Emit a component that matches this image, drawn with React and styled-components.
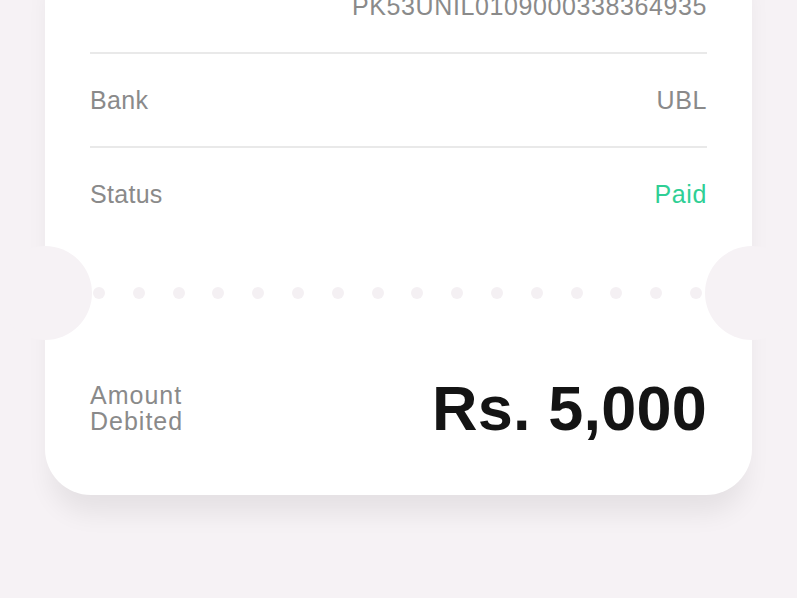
import React from 'react';
import styled, { createGlobalStyle } from 'styled-components';

const GlobalStyle = createGlobalStyle`
  html, body {
    margin: 0;
    padding: 0;
    background-color: #f6f2f5;
    font-family: "Liberation Sans", Arial, sans-serif;
  }
`;

const Page = styled.div`
  width: 797px;
  height: 598px;
  overflow: hidden;
  background-color: #f6f2f5;
`;

const Card = styled.div`
  position: relative;
  margin: -40px 45px 0;
  background-color: #fff;
  border-radius: 0 0 46px 46px;
  box-shadow: 0 24px 26px -6px rgba(0, 0, 0, 0.07);
`;

const Details = styled.div`
  padding: 0 45px;
`;

const Row = styled.div`
  display: flex;
  justify-content: space-between;
  align-items: center;
  height: 92px;
  border-bottom: ${(p) => (p.last ? 'none' : '2px solid #e9e9e9')};
`;

const Label = styled.span`
  font-size: 25px;
  color: #8a8a8a;
  letter-spacing: 0.3px;
`;

const Value = styled.span`
  font-size: 25px;
  color: ${(p) => p.color || '#8a8a8a'};
  letter-spacing: 0.6px;
`;

const Perforation = styled.div`
  position: relative;
  height: 106px;
  display: flex;
  align-items: center;
  justify-content: space-between;
  padding: 0 50px 0 48px;
`;

const Notch = styled.div`
  position: absolute;
  top: 6px;
  ${(p) => (p.side === 'left' ? 'left: -47px;' : 'right: -47px;')}
  width: 94px;
  height: 94px;
  border-radius: 50%;
  background-color: #f6f2f5;
`;

const Dot = styled.div`
  width: 12px;
  height: 12px;
  border-radius: 50%;
  background-color: #f4f0f3;
`;

const Total = styled.div`
  display: flex;
  justify-content: space-between;
  align-items: center;
  height: 56px;
  padding: 34px 45px 59px;
`;

const TotalLabel = styled.div`
  font-size: 25px;
  line-height: 26px;
  color: #8a8a8a;
  letter-spacing: 1px;
`;

const Amount = styled.div`
  font-size: 63px;
  font-weight: bold;
  color: #141414;
  letter-spacing: 0.2px;
`;

const rows = [
  { label: '', value: 'PK53UNIL0109000338364935' },
  { label: 'Bank', value: 'UBL' },
  { label: 'Status', value: 'Paid', color: '#2fcf95' },
];

const App = () => {
  return (
    <Page>
      <GlobalStyle />
      <Card>
        <Details>
          {rows.map((row, i) => (
            <Row key={i} last={i === rows.length - 1}>
              <Label>{row.label}</Label>
              <Value color={row.color}>{row.value}</Value>
            </Row>
          ))}
        </Details>
        <Perforation>
          <Notch side="left" />
          {Array.from({ length: 16 }).map((_, i) => (
            <Dot key={i} />
          ))}
          <Notch side="right" />
        </Perforation>
        <Total>
          <TotalLabel>
            Amount
            <br />
            Debited
          </TotalLabel>
          <Amount>Rs. 5,000</Amount>
        </Total>
      </Card>
    </Page>
  );
};

export default App;
